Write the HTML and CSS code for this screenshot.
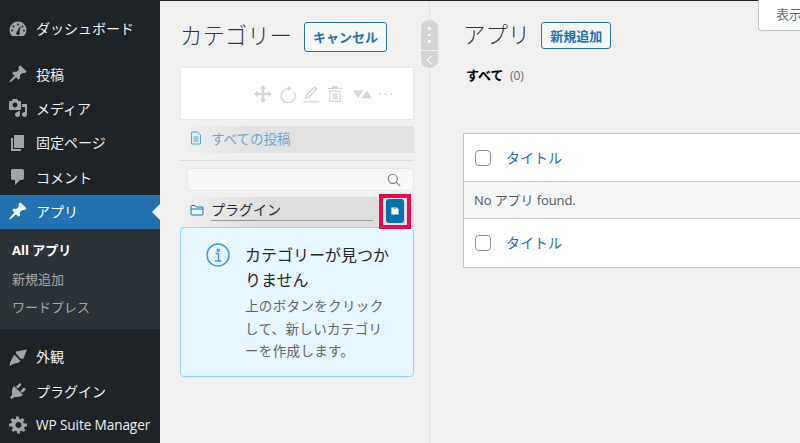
FILE: index.html
```html
<!DOCTYPE html>
<html lang="ja">
<head>
<meta charset="utf-8">
<title>アプリ</title>
<link rel="stylesheet" href="styles.css">
</head>
<body>
<div class="app">
  <nav class="sidebar">
    <ul class="menu menu-first">
      <li class="item"><svg class="ico" viewBox="0 0 20 20"><path d="M10 2.500a8.500 8.500 0 0 0-8.500 8.500c0 2.400 1 4.600 2.600 6.100h11.800A8.500 8.500 0 0 0 18.500 11 8.500 8.500 0 0 0 10 2.500zM10 4.500a1 1 0 1 1 0 2 1 1 0 0 1 0-2zM5.500 6.500a1 1 0 1 1 0 2 1 1 0 0 1 0-2zM14.500 6.500a1 1 0 1 1 0 2 1 1 0 0 1 0-2zM4 10.500a1 1 0 1 1 0 2 1 1 0 0 1 0-2zM16 10.500a1 1 0 1 1 0 2 1 1 0 0 1 0-2zM12 7.500l.8.400L11.300 13a1.800 1.800 0 1 1-2.600 0z" fill-rule="evenodd"/></svg><span>ダッシュボード</span></li>
    </ul>
    <ul class="menu menu-group">
      <li class="item"><svg class="ico" viewBox="0 0 20 20"><path d="M10.440 3.020l1.820-1.820 6.360 6.350-1.830 1.820c-1.050-.68-2.480-.57-3.410.36l-.75.75c-.92.93-1.040 2.350-.35 3.410l-1.830 1.820-2.410-2.410-2.800 2.790c-.42.42-3.380 2.710-3.800 2.290s1.860-3.380 2.280-3.800l2.790-2.790L4.100 9.360l1.830-1.820c1.050.69 2.480.57 3.400-.36l.75-.75c.93-.92 1.050-2.350.36-3.410z"/></svg><span>投稿</span></li>
      <li class="item"><svg class="ico" viewBox="0 0 20 20"><path d="M13 11V4c0-.55-.45-1-1-1h-1.670L9 1H5L3.670 3H2c-.55 0-1 .45-1 1v7c0 .55.45 1 1 1h10c.55 0 1-.45 1-1zM7 4.500c1.380 0 2.500 1.120 2.500 2.500S8.380 9.500 7 9.500 4.500 8.380 4.500 7 5.620 4.500 7 4.500zM14 6h5v10.500c0 1.380-1.120 2.500-2.500 2.500S14 17.880 14 16.500s1.120-2.500 2.500-2.500c.17 0 .34.020.5.050V9h-3V6zm-4 8.050V13h2v3.500c0 1.380-1.120 2.500-2.500 2.500S7 17.880 7 16.500 8.120 14 9.500 14c.17 0 .34.020.5.050z"/></svg><span>メディア</span></li>
      <li class="item"><svg class="ico" viewBox="0 0 20 20"><path d="M6 15V2h10v13H6zm-1 1h8v2H3V5h2v11z"/></svg><span>固定ページ</span></li>
      <li class="item"><svg class="ico" viewBox="0 0 20 20"><path d="M5 2h9c1.100 0 2 .9 2 2v7c0 1.100-.9 2-2 2h-2l-5 5v-5H5c-1.100 0-2-.9-2-2V4c0-1.100.9-2 2-2z"/></svg><span>コメント</span></li>
      <li class="item item-current"><svg class="ico" viewBox="0 0 20 20"><path d="M10.440 3.020l1.820-1.820 6.360 6.350-1.830 1.820c-1.050-.68-2.480-.57-3.410.36l-.75.75c-.92.93-1.040 2.350-.35 3.410l-1.830 1.820-2.410-2.410-2.800 2.790c-.42.42-3.380 2.710-3.800 2.290s1.860-3.380 2.280-3.800l2.790-2.790L4.100 9.360l1.830-1.820c1.050.69 2.480.57 3.400-.36l.75-.75c.93-.92 1.050-2.350.36-3.410z"/></svg><span>アプリ</span><i class="arrow"></i></li>
    </ul>
    <ul class="submenu">
      <li class="sub sub-current">All アプリ</li>
      <li class="sub">新規追加</li>
      <li class="sub">ワードプレス</li>
    </ul>
    <ul class="menu menu-group2">
      <li class="item"><svg class="ico" viewBox="0 0 20 20"><path d="M8 4.500l11-2-3.500 9-2.500.5-5-5.500z"/><path d="M6.300 7.700l6 6c-.6 1.400-2 2.400-3.800 2.500-2.300.2-4.500 1-7 3 .4-3 1-5.200 2.200-7 .9-1.400 1.500-3.400 2.600-4.500z"/></svg><span>外観</span></li>
      <li class="item"><svg class="ico" viewBox="0 0 20 20"><path d="M13.110 4.360L9.870 7.600 8 5.730l3.240-3.240c.35-.34 1.050-.2 1.560.32.520.51.660 1.210.310 1.550zm-8 1.770l.91-1.120 9.010 9.010-1.190.84c-.71.71-2.630 1.160-3.820 1.160H6.140L4.900 17.260c-.59.59-1.540.59-2.120 0-.59-.58-.59-1.530 0-2.120l1.240-1.240v-3.880c0-1.130.4-3.190 1.090-3.890zm7.260 3.970l3.240-3.240c.34-.35 1.040-.21 1.550.31.520.51.660 1.210.31 1.550l-3.240 3.250z"/></svg><span>プラグイン</span></li>
      <li class="item"><svg class="ico" viewBox="0 0 20 20"><path transform="translate(1 -.5)" d="M18 12h-2.180c-.17.7-.44 1.350-.81 1.930l1.540 1.540-2.100 2.100-1.540-1.540c-.58.36-1.230.64-1.910.81V19H8v-2.180c-.68-.17-1.330-.45-1.910-.81l-1.540 1.540-2.120-2.120 1.540-1.540c-.36-.58-.64-1.230-.81-1.890H0V9h2.180c.17-.7.45-1.350.81-1.930L1.450 5.530l2.100-2.100 1.540 1.540c.58-.36 1.230-.64 1.910-.81V2h3v2.180c.68.17 1.330.45 1.910.81l1.540-1.540 2.120 2.120-1.540 1.540c.36.58.64 1.230.81 1.890H18v3zm-8.500 1.500c1.660 0 3-1.340 3-3s-1.340-3-3-3-3 1.340-3 3 1.340 3 3 3z"/></svg><span class="latin">WP Suite Manager</span></li>
    </ul>
  </nav>

  <aside class="panel">
    <div class="head">
      <h2 class="title">カテゴリー</h2>
      <span class="btn btn-cancel">キャンセル</span>
    </div>
    <div class="toolbar">
      <svg class="tool" viewBox="0 0 20 20"><path d="M10 0l3.500 4H11.500v4.500H16V6.500l4 3.500-4 3.500v-2h-4.500V16h2L10 20l-3.500-4h2v-4.500H4v2L0 10l4-3.500v2h4.500V4h-2z"/></svg>
      <svg class="tool" viewBox="0 0 20 20"><path d="M11 .5l4 3.200-4 3.200V5a7 7 0 1 0 6.300 3.500l1.400-.9A8.700 8.700 0 1 1 11 3.300z"/></svg>
      <svg class="tool" viewBox="0 0 20 20"><path d="M14 1l3.500 3.500L7.500 14.500 3 15.500l1-4.500zM13.800 3.500L5.500 11.800 5 13.500l1.700-.5L15 4.700z" fill-rule="evenodd"/><path d="M1 18h18v1.300H1z"/></svg>
      <svg class="tool" viewBox="0 0 20 20"><path d="M7 1h6v2h5v1.500H2V3h5zM3.500 6H16.500v13h-13zM5 7.500v10h10v-10zM7 9h1.500v7H7zM9.300 9h1.500v7H9.300zM11.500 9H13v7h-1.500z" fill-rule="evenodd"/></svg>
      <svg class="tool tool-wide" viewBox="0 0 20 10"><path d="M0 1h11L5.500 9.500z"/><path d="M9 9.500l5.500-8.500 5.500 8.500z"/></svg>
      <svg class="tool tool-dots" viewBox="0 0 16 4"><circle cx="2" cy="2" r="1"/><circle cx="8" cy="2" r="1"/><circle cx="14" cy="2" r="1"/></svg>
    </div>
    <div class="all-row">
      <svg class="doc" viewBox="0 0 12 14"><path d="M1.500 1h6l3 3v9h-9z" fill="#dff0f8" stroke="#5da7cc"/><path d="M3.500 6h5M3.500 8h5M3.500 10h5" stroke="#5da7cc"/></svg>
      <span>すべての投稿</span>
    </div>
    <hr class="rule">
    <div class="search">
      <svg class="search-ico" viewBox="0 0 14 14"><circle cx="5.800" cy="5.800" r="4.600"/><path d="M9.200 9.200l4 4"/></svg>
    </div>
    <div class="cat-row">
      <svg class="folder" viewBox="0 0 14 12"><path d="M1 2.500a1 1 0 0 1 1-1h3l1 1.500h6a1 1 0 0 1 1 1v6a1 1 0 0 1-1 1H2a1 1 0 0 1-1-1z" fill="#eaf5fb" stroke="#1379ab"/><path d="M1 5h12" stroke="#1379ab"/></svg>
      <span class="cat-name">プラグイン</span>
      <span class="save">
        <svg class="save-ico" viewBox="0 0 10 10"><path d="M.5.500h6.500l2.500 2.500v6.500H.5z" fill="#fff"/><path d="M3 .5h3v2.500H3z" fill="#7fb8d4"/></svg>
        <i class="mark"></i>
      </span>
    </div>
    <div class="info">
      <svg class="info-ico" viewBox="0 0 24 24"><circle cx="12" cy="12" r="11"/><path d="M9.500 10.500h3V18M9 18h6.500M11.500 6.500h1.500v1.500h-1.500z"/></svg>
      <div class="info-body">
        <p class="info-title">カテゴリーが見つかりません</p>
        <p class="info-desc">上のボタンをクリックして、新しいカテゴリーを作成します。</p>
      </div>
    </div>
    <div class="handle">
      <div class="handle-top"><b></b><b></b><b></b></div>
      <div class="handle-bot"><svg viewBox="0 0 8 12"><path d="M6.500 1L1.500 6l5 5"/></svg></div>
    </div>
  </aside>

  <main class="main">
    <div class="screen-tab">表示</div>
    <div class="head head-main">
      <h1 class="title">アプリ</h1>
      <span class="btn btn-add">新規追加</span>
    </div>
    <p class="filter"><strong>すべて</strong> <span class="count">(0)</span></p>
    <div class="table">
      <div class="tr tr-head"><i class="check"></i><span class="col">タイトル</span></div>
      <div class="tr tr-empty"><span class="empty-text">No アプリ found.</span></div>
      <div class="tr tr-foot"><i class="check"></i><span class="col">タイトル</span></div>
    </div>
  </main>
</div>
</body>
</html>
```
FILE: styles.css
```css
* { box-sizing: border-box; }
html, body { margin: 0; padding: 0; height: 100%; overflow: hidden; }
body {
  background: #f0f0f1;
  color: #3c434a;
  font-family: "Open Sans", "Noto Sans CJK JP", sans-serif;
  font-size: 14px;
}
ul { list-style: none; margin: 0; padding: 0; }
p, h1, h2 { margin: 0; }

.app { display: flex; height: 443px; border-top: 1px solid #1d2327; }

/* sidebar */
.sidebar { width: 160px; flex: none; background: #1d2327; color: #f0f0f1; margin-top: -1px; }
.menu-first { padding-top: 12px; }
.menu-group { margin-top: 11px; }
.menu-group2 { margin-top: 11px; }
.item {
  position: relative;
  display: flex;
  align-items: center;
  height: 34.4px;
  padding: 0 0 2px 8px;
  gap: 8px;
  font-size: 14px;
  color: #f0f0f1;
}
.ico { width: 20px; height: 20px; flex: none; fill: #a0a5aa; margin-top: 1px; }
.latin { font-size: 13.6px; white-space: nowrap; letter-spacing: -.1px; }
.item-current { background: #2271b1; color: #fff; height: 34px; }
.item-current .ico { fill: #fff; }
.arrow {
  position: absolute;
  right: 0;
  top: 9px;
  border: 8px solid transparent;
  border-right-color: #f0f0f1;
  border-left-width: 0;
}
.submenu { background: #2c3338; padding: 7px 0; height: 100px; }
.sub { height: 28.6px; line-height: 28px; padding-left: 12px; font-size: 13px; color: #a7aaad; }
.sub-current { color: #fff; font-weight: 700; }

/* category panel */
.panel {
  position: relative;
  width: 270px;
  flex: none;
  padding: 0 16px 0 20px;
  border-right: 1px solid #e2e2e2;
}
.head { display: flex; align-items: center; height: 30px; margin-top: 21px; gap: 12px; }
.title { font-size: 22.4px; font-weight: 300; color: #2f363b; line-height: 28px; padding-bottom: 2px; white-space: nowrap; }
.btn {
  display: flex;
  align-items: center;
  justify-content: center;
  border: 1px solid #2271b1;
  border-radius: 3px;
  background: #f6f7f7;
  color: #2271b1;
  font-size: 13px;
  font-weight: 700;
  white-space: nowrap;
  padding-bottom: 1px;
}
.btn-cancel { width: 83px; height: 30px; }
.toolbar {
  display: flex;
  align-items: center;
  justify-content: flex-end;
  gap: 6px;
  height: 53px;
  width: 234px;
  margin-top: 15px;
  padding: 0 20px 0 0;
  background: #fff;
  border: 1px solid #e8e8e8;
}
.tool { width: 18px; height: 18px; flex: none; fill: #d6d6d6; }
.tool-wide { width: 19px; height: 10px; margin-left: 3px; }
.tool-dots { width: 15px; height: 4px; }
.all-row {
  display: flex;
  align-items: center;
  gap: 9px;
  width: 234px;
  height: 27px;
  margin-top: 6px;
  padding: 0 0 3px 10px;
  font-size: 13.5px;
  color: #6aa9cc;
  background: linear-gradient(90deg, #f0f0f0 0, #e2e2e2 30%, #e2e2e2 100%);
}
.doc { width: 12px; height: 14px; flex: none; fill: none; }
.rule { width: 234px; height: 1px; margin: 7px 0 7px; border: 0; background: #dcdcdc; }
.search {
  display: flex;
  align-items: center;
  justify-content: flex-end;
  width: 227px;
  height: 23px;
  margin-left: 7px;
  padding-right: 12px;
  background: #f8f8f8;
  border: 1px solid #e6e6e6;
  border-radius: 4px;
}
.search-ico { width: 14px; height: 14px; fill: none; stroke: #808080; stroke-width: 1.1; }
.cat-row {
  display: flex;
  align-items: center;
  width: 234px;
  height: 30px;
  margin-top: 6px;
  padding: 0 10px 0 10px;
  background: linear-gradient(90deg, #f0f0f0 0, #dedede 35%, #dedede 100%);
}
.folder { width: 14px; height: 12px; flex: none; fill: none; margin: 0 7px 4px 0; }
.cat-name {
  width: 162px;
  margin: 0 13px 4px 0;
  border-bottom: 1px solid #9a9a9a;
  color: #23282d;
  font-size: 14px;
  line-height: 20px;
}
.save {
  position: relative;
  display: flex;
  align-items: center;
  justify-content: center;
  width: 18px;
  height: 24px;
  margin-top: -2px;
  background: #0073aa;
  border-radius: 3px;
  flex: none;
}
.save-ico { width: 8px; height: 8px; }
.mark {
  position: absolute;
  left: -7px;
  top: -5px;
  width: 32px;
  height: 35px;
  border: 4px solid #e8094f;
}
.info {
  display: flex;
  width: 234px;
  height: 150px;
  padding: 15px 20px 0 25px;
  gap: 15px;
  background: #e6f7ff;
  border: 1px solid #91d5ff;
  border-radius: 4px;
}
.info-ico { width: 24px; height: 24px; flex: none; fill: none; stroke: #3b99f0; stroke-width: 1.5; }
.info-title { font-size: 16px; line-height: 25px; color: #262626; }
.info-desc { margin-top: 2px; font-size: 13.5px; line-height: 22.5px; letter-spacing: .35px; color: #636363; }
.handle { position: absolute; left: 261px; top: 19px; width: 17px; }
.handle-top {
  display: flex;
  flex-direction: column;
  align-items: center;
  gap: 4px;
  justify-content: center;
  height: 30px;
  background: #d4d4d4;
  border-radius: 8px 8px 0 0;
}
.handle-top b { width: 2.5px; height: 2.5px; background: #f6f6f6; }
.handle-bot {
  display: flex;
  align-items: center;
  justify-content: center;
  height: 17px;
  margin-top: 1px;
  background: #d4d4d4;
  border-radius: 0 0 8px 8px;
}
.handle-bot svg { width: 7px; height: 10px; fill: none; stroke: #f6f6f6; stroke-width: 1.6; }

/* main */
.main { position: relative; flex: 1; min-width: 0; padding-left: 33px; }
.screen-tab {
  position: absolute;
  right: 0;
  top: -1px;
  width: 42px;
  height: 31px;
  padding: 4px 0 0 17px;
  overflow: hidden;
  white-space: nowrap;
  background: #fff;
  border: 1px solid #c3c4c7;
  border-top: 0;
  border-right: 0;
  border-radius: 0 0 0 4px;
  font-size: 13px;
  color: #646970;
}
.head-main { gap: 11px; height: 27px; margin-top: 21px; }
.btn-add { width: 70px; height: 27px; }
.filter { margin-top: 16px; height: 20px; line-height: 20px; font-size: 13px; padding-left: 3px; }
.filter strong { color: #000; margin-right: 3px; }
.count { font-size: 12px; color: #646970; }
.table { margin-top: 48px; width: 360px; background: #fff; border: 1px solid #c3c4c7; border-right: 0; }
.tr { display: flex; align-items: center; }
.tr-head { height: 48px; padding-left: 11px; border-bottom: 1px solid #c3c4c7; }
.tr-empty { height: 37px; padding-left: 10px; font-size: 13px; color: #50575e; background: #f6f7f7; border-bottom: 1px solid #c3c4c7; }
.empty-text { margin-bottom: 2px; letter-spacing: -.1px; }
.tr-foot { height: 48px; padding-left: 11px; }
.check { width: 16px; height: 16px; flex: none; background: #fff; border: 1px solid #8c8f94; border-radius: 4px; }
.col { margin: 0 0 2px 15px; font-size: 14px; color: #2271b1; }
```
